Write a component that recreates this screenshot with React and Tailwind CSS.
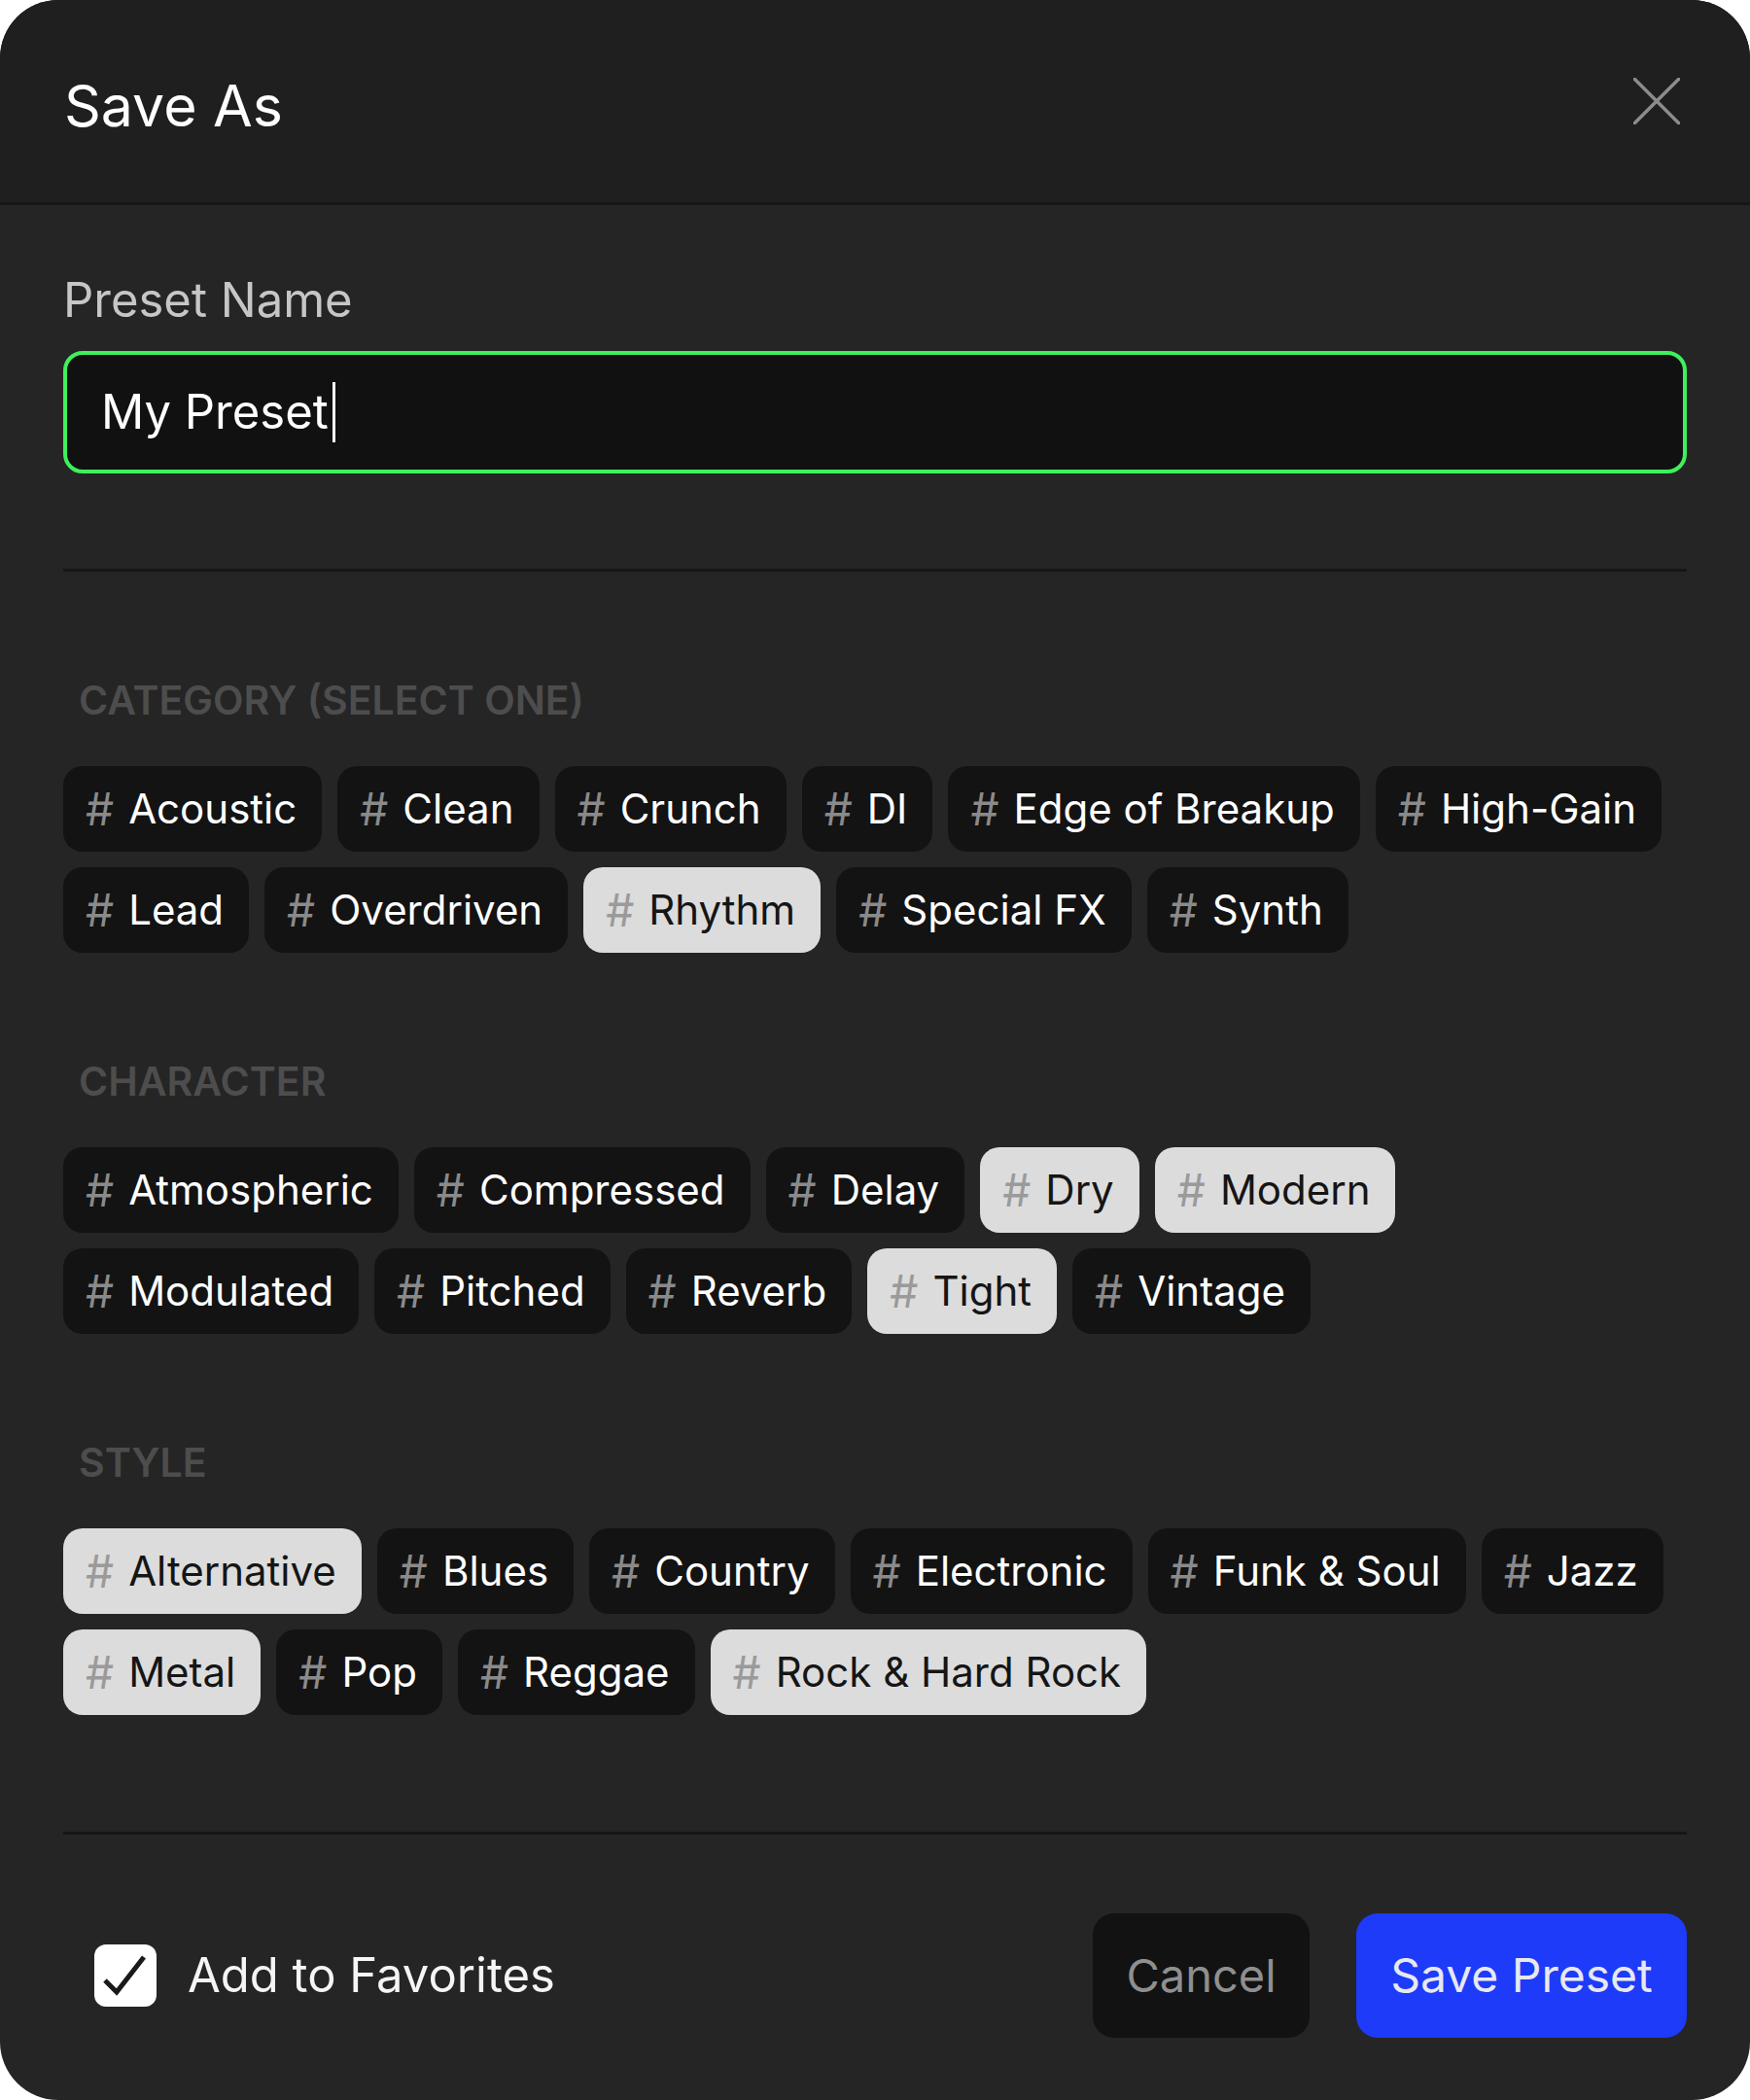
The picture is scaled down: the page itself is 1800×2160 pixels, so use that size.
import React from "react";

const sections = [
  {
    title: "CATEGORY (SELECT ONE)",
    rows: [
      ["Acoustic", "Clean", "Crunch", "DI", "Edge of Breakup", "High-Gain"],
      ["Lead", "Overdriven", "Rhythm", "Special FX", "Synth"],
    ],
  },
  {
    title: "CHARACTER",
    rows: [
      ["Atmospheric", "Compressed", "Delay", "Dry", "Modern"],
      ["Modulated", "Pitched", "Reverb", "Tight", "Vintage"],
    ],
  },
  {
    title: "STYLE",
    rows: [
      ["Alternative", "Blues", "Country", "Electronic", "Funk & Soul", "Jazz"],
      ["Metal", "Pop", "Reggae", "Rock & Hard Rock"],
    ],
  },
];

const selected = ["Rhythm", "Dry", "Modern", "Tight", "Alternative", "Metal", "Rock & Hard Rock"];

const Tag = ({ label }) => {
  const on = selected.includes(label);
  return (
    <div
      className={
        on
          ? "h-[88px] rounded-[20px] bg-[#dcdcdc] pl-[23px] pr-[26px] flex items-center gap-[15px] text-[42px] text-[#151515]"
          : "h-[88px] rounded-[20px] bg-[#131313] pl-[23px] pr-[26px] flex items-center gap-[15px] text-[42px] text-white"
      }
    >
      <span className={on ? "text-[46px] text-[#9a9a9a]" : "text-[46px] text-[#8a8a8a]"}>#</span>
      <span className="whitespace-nowrap">{label}</span>
    </div>
  );
};

const Section = ({ title, rows }) => (
  <div className="mt-[112px]">
    <div className="pl-[16px] text-[41px] leading-[40px] font-semibold text-[#4d4d4d]">{title}</div>
    <div className="mt-[48px] flex flex-col gap-[16px]">
      {rows.map((row, i) => (
        <div key={i} className="flex gap-[16px] leading-none">
          {row.map((t) => (
            <Tag key={t} label={t} />
          ))}
        </div>
      ))}
    </div>
  </div>
);

export default function App() {
  return (
    <div className="min-h-screen bg-white font-['Inter',sans-serif]">
      <div className="w-[1800px] h-[2160px] rounded-[60px] bg-[#252525] overflow-hidden flex flex-col">
        {/* header */}
        <div className="h-[211px] shrink-0 bg-[#1f1f1f] border-b-[3px] border-[#161616] flex items-center justify-between pl-[66px] pr-[72px]">
          <h1 className="mt-[10px] text-[59px] leading-[60px] text-white">Save As</h1>
          <svg width="48" height="48" viewBox="0 0 48 48" className="shrink-0">
            <path d="M1 1 L47 47 M47 1 L1 47" stroke="#8c8c8c" strokeWidth="3.5" strokeLinecap="round" />
          </svg>
        </div>

        <div className="flex-1 px-[65px] pt-[74px] flex flex-col">
          <label className="text-[49px] leading-[48px] text-[#c6c6c6]">Preset Name</label>
          <div className="mt-[28px] h-[126px] rounded-[20px] border-[4px] border-[#3ef05b] bg-[#111111] flex items-center pl-[35px]">
            <span className="text-[49px] leading-[48px] text-white">My Preset</span>
            <span className="ml-[4px] w-[3px] h-[62px] bg-white" />
          </div>

          <div className="mt-[98px] h-[3px] bg-[#161616]" />

          {sections.map((s) => (
            <Section key={s.title} {...s} />
          ))}

          <div className="mt-[120px] h-[3px] bg-[#161616]" />

          {/* footer */}
          <div className="mt-[81px] h-[128px] flex items-center">
            <div className="ml-[32px] w-[64px] h-[64px] rounded-[12px] bg-white flex items-center justify-center">
              <svg width="64" height="64" viewBox="0 0 64 64">
                <path d="M11 37 L23 49 L51 13" fill="none" stroke="#1a1a1a" strokeWidth="5" />
              </svg>
            </div>
            <span className="ml-[32px] text-[49px] leading-[48px] text-[#f5f5f5]">Add to Favorites</span>
            <div className="ml-auto flex items-center gap-[48px]">
              <button className="h-[128px] w-[223px] rounded-[22px] bg-[#121212] text-[47px] text-[#8f8f8f]">Cancel</button>
              <button className="h-[128px] w-[340px] rounded-[22px] bg-[#1d3bf8] text-[48px] text-[#e8e8f0]">Save Preset</button>
            </div>
          </div>
        </div>
      </div>
    </div>
  );
}
